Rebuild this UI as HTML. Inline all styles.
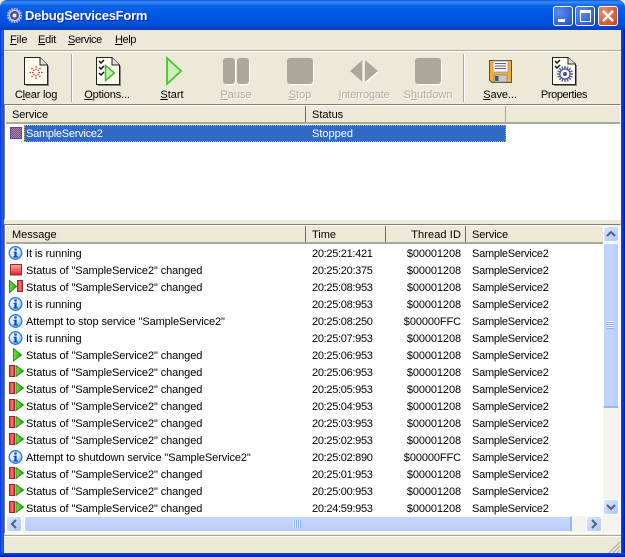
<!DOCTYPE html>
<html><head><meta charset="utf-8"><style>
html,body{margin:0;padding:0;width:625px;height:557px;overflow:hidden;background:#ece9d8}
*{box-sizing:border-box}
body{font:11px/14px "Liberation Sans",sans-serif;color:#000;position:relative}
.a,.a *{position:absolute}
.t{white-space:nowrap}
u{position:static!important}
.tb{top:88px;width:80px;text-align:center;white-space:nowrap}
.dis{color:#aca899;text-shadow:1px 1px 0 #fff}
.hd{background:#ece9d8;border-bottom:2px solid #aca899;height:18px}
.hc{top:0;height:18px;padding:2px 0 0 6px;white-space:nowrap}
.sep{width:1px;height:14px;top:1px;background:#aca899}
.r{left:6px;width:597px;height:17px}
.r svg{left:2px;top:1px}
.r span{top:2px;white-space:nowrap}
.m{left:20px;letter-spacing:-.1px}.ti{left:306px;letter-spacing:-.3px}.th{right:142px;letter-spacing:-.1px}.s{left:466px;letter-spacing:-.25px}
.btn{border:1px solid #fff;border-radius:3px;background:linear-gradient(135deg,#dbe6fd,#aec6f8)}
</style></head><body>
<svg width="0" height="0" style="position:absolute"><defs>
<radialGradient id="ib" cx=".4" cy=".35" r=".7"><stop offset="0" stop-color="#fff"/><stop offset=".55" stop-color="#d4ecff"/><stop offset="1" stop-color="#5cb0f4"/></radialGradient>
<linearGradient id="rd" x1="0" y1="0" x2="0" y2="1"><stop offset="0" stop-color="#f8a8a8"/><stop offset=".5" stop-color="#f46868"/><stop offset="1" stop-color="#e81c1c"/></linearGradient>
<linearGradient id="rh" x1="0" y1="0" x2="1" y2="0"><stop offset="0" stop-color="#f02020"/><stop offset=".5" stop-color="#f88080"/><stop offset="1" stop-color="#e01818"/></linearGradient>
<linearGradient id="gr" x1="0" y1="0" x2="1" y2="0"><stop offset="0" stop-color="#78dc48"/><stop offset="1" stop-color="#18a806"/></linearGradient>
<pattern id="dith" width="2" height="2" patternUnits="userSpaceOnUse"><rect width="2" height="2" fill="#f07070"/><rect width="1" height="1" fill="#3a62c4"/><rect x="1" y="1" width="1" height="1" fill="#3a62c4"/></pattern>
<symbol id="info" viewBox="0 0 15 15"><circle cx="7.500" cy="7" r="6.300" fill="url(#ib)" stroke="#2478e8" stroke-width="1.300"/><rect x="6.300" y="2.400" width="2.400" height="2.200" fill="#0f44c4"/><path d="M5.500 5.600h3.200v4.600h1.200v1.300H5.400v-1.300h1V6.900h-.9z" fill="#0f44c4"/></symbol>
<symbol id="stop" viewBox="0 0 15 15"><rect x="2.500" y="1.500" width="11" height="10.500" fill="url(#rd)" stroke="#8f2b2b"/></symbol>
<symbol id="play" viewBox="0 0 15 15"><path d="M5.500 .5L13.500 7L5.500 13z" fill="url(#gr)" stroke="#1f980c"/></symbol>
<symbol id="pr" viewBox="0 0 18 15"><path d="M.5 .5L7.500 6.500L.5 12.500z" fill="url(#gr)" stroke="#1f980c"/><rect x="8.500" y=".5" width="5" height="11" fill="url(#rh)" stroke="#8f2b2b"/></symbol>
<symbol id="rp" viewBox="0 0 18 15"><rect x=".5" y=".5" width="5" height="11" fill="url(#rh)" stroke="#8f2b2b"/><path d="M7 .5L14.500 6L7 11.500z" fill="url(#gr)" stroke="#1f980c"/></symbol>
</defs></svg>
<div class="a" style="left:0;top:0;width:625px;height:557px">
 <!-- frame -->
 <div style="left:0;top:0;width:625px;height:30px;border-radius:7px 7px 0 0;background:linear-gradient(#0a58e0 0,#3c8cf6 2px,#0a62e6 6px,#0058e6 14px,#0052dc 24px,#0a3fc0 29px)"></div>
 <div style="left:0;top:30px;width:4px;height:527px;background:linear-gradient(90deg,#0831d9,#1f5ff0 50%,#0a4ae0)"></div>
 <div style="left:621px;top:30px;width:4px;height:527px;background:linear-gradient(90deg,#0a4ae0,#0831d9 50%,#0019a8)"></div>
 <div style="left:0;top:553px;width:625px;height:4px;background:linear-gradient(#0a4ae0,#0019a8)"></div>
 <svg style="left:7px;top:8px" width="15" height="15" viewBox="0 0 15 15"><g stroke="#b8b8dc" stroke-width="1.800"><path d="M7.500 0v15M0 7.500h15M2.200 2.200l10.600 10.600M12.800 2.200L2.200 12.800M4.500 .5l6 14M10.500 .5l-6 14M.5 4.500l14 6M.5 10.500l14-6"/></g><circle cx="7.500" cy="7.500" r="5" fill="#50508c" stroke="#ccccE4"/><circle cx="7.500" cy="7.500" r="2" fill="#e8e8f4"/></svg>
 <div class="t" style="left:25px;top:8px;color:#fff;line-height:16px;font-weight:bold;text-shadow:1px 1px 0 #0a2a9c;letter-spacing:-.25px;font-size:13px">DebugServicesForm</div>
 <!-- caption buttons -->
 <div style="left:553px;top:6px;width:20px;height:20px;border:1px solid #fff;border-radius:3px;background:radial-gradient(circle at 30% 30%,#5c8cf0,#1f4fd0)"><div style="left:4px;top:12px;width:7px;height:3px;background:#fff"></div></div>
 <div style="left:575px;top:6px;width:20px;height:20px;border:1px solid #fff;border-radius:3px;background:radial-gradient(circle at 30% 30%,#5c8cf0,#1f4fd0)"><div style="left:4px;top:3px;width:11px;height:12px;border:1px solid #fff;border-top:3px solid #fff"></div></div>
 <div style="left:598px;top:6px;width:20px;height:20px;border:1px solid #fff;border-radius:3px;background:radial-gradient(circle at 30% 30%,#ee9070,#c8401c)"><svg style="left:3px;top:3px" width="12" height="12"><path d="M1 1L11 11M11 1L1 11" stroke="#fff" stroke-width="2.400"/></svg></div>
 <!-- menu -->
 <div class="t" style="left:10px;top:33px;letter-spacing:-.1px"><u>F</u>ile</div>
 <div class="t" style="left:38px;top:33px;letter-spacing:-.2px"><u>E</u>dit</div>
 <div class="t" style="left:68px;top:33px;letter-spacing:-.4px"><u>S</u>ervice</div>
 <div class="t" style="left:115px;top:33px;letter-spacing:-.4px"><u>H</u>elp</div>
 <div style="left:4px;top:50px;width:617px;height:1px;background:#aca899"></div>
 <div style="left:4px;top:51px;width:617px;height:1px;background:#fff"></div>
 <!-- toolbar icons -->
 <svg style="left:24px;top:57px" width="25" height="29" viewBox="0 0 25 29"><path d="M.5.5H16L23.500 8V27.500H.5z" fill="#fffff0" stroke="#222"/><path d="M16 .5V8H23.500" fill="#ddd" stroke="#222"/><path d="M24.500 9V28.500H2" fill="none" stroke="#888"/><g stroke="#d22" stroke-width="1.200" stroke-dasharray="1.500 1"><path d="M12 9v4M12 18v4M5.500 15.500h4M14.500 15.500h4M7.500 11l3 3M13.500 17l3 3M16.500 11l-3 3M7.500 20l3-3"/></g></svg>
 <svg style="left:96px;top:57px" width="25" height="29" viewBox="0 0 25 29"><path d="M.5.5H16L23.500 8V27.500H.5z" fill="#fffff0" stroke="#222"/><path d="M16 .5V8H23.500" fill="#ddd" stroke="#222"/><path d="M24.500 9V28.500H2" fill="none" stroke="#888"/><path d="M3 4l2 2 3-3M3 10l2 2 3-3M3 16l2 2 3-3" fill="none" stroke="#111" stroke-width="1.500"/><path d="M9.500 8.500L18.500 16L9.500 23.500z" fill="#c8f0b4" stroke="#46b52a" stroke-width="1.500"/></svg>
 <svg style="left:165px;top:56px" width="18" height="30" viewBox="0 0 18 30"><path d="M2 2L16 15L2 28z" fill="#cdf0bd" stroke="#4cc22e" stroke-width="1.800"/></svg>
 <div style="left:223px;top:58px;width:12px;height:26px;background:#aca899;border-radius:3px;box-shadow:1px 1px 0 #fff"></div>
 <div style="left:237px;top:58px;width:12px;height:26px;background:#aca899;border-radius:3px;box-shadow:1px 1px 0 #fff"></div>
 <div style="left:287px;top:58px;width:26px;height:26px;background:#aca899;border-radius:3px;box-shadow:1px 1px 0 #fff"></div>
 <svg style="left:350px;top:60px" width="30" height="24" viewBox="0 0 30 24"><path d="M0 11L12.500 0V22zM15 0L28 11L15 22z" fill="#fff" transform="translate(1 1)"/><path d="M0 11L12.500 0V22zM15 0L28 11L15 22z" fill="#aca899"/></svg>
 <div style="left:415px;top:58px;width:26px;height:26px;background:#aca899;border-radius:3px;box-shadow:1px 1px 0 #fff"></div>
 <svg style="left:489px;top:60px" width="23" height="24" viewBox="0 0 23 24"><path d="M.5.5H22.500V22.500H3L.5 20z" fill="#f2ad40" stroke="#5c5030"/><rect x="4" y="1" width="15" height="11" fill="#f4f4f4" stroke="#8a8a8a" stroke-width=".6"/><path d="M6 3.500h11M6 6h11M6 8.500h11" stroke="#667"/><rect x="5" y="15" width="13" height="7" fill="#c8c8c8" stroke="#777" stroke-width=".6"/><rect x="6" y="16" width="3.500" height="5" fill="#555"/></svg>
 <svg style="left:552px;top:57px" width="25" height="29" viewBox="0 0 25 29"><path d="M.5.5H16L23.500 7V27.500H.5z" fill="#fffff0" stroke="#222"/><path d="M16 .5V7H23.500" fill="#ddd" stroke="#222"/><path d="M24.500 8V28.500H2" fill="none" stroke="#888"/><path d="M3 4l2 2 3-3M3 9l2 2 3-3" fill="none" stroke="#111" stroke-width="1.500"/><g stroke="#5a5aa8" stroke-width="1.500"><path d="M13 9v16M5 17h16M7.300 11.300l11.400 11.400M18.700 11.300L7.300 22.700M9.900 9.600l6.200 14.800M16.100 9.600L9.900 24.400M5.600 13.900l14.800 6.200M5.600 20.100l14.800-6.200"/></g><circle cx="13" cy="17" r="5" fill="#fffff0" stroke="#4a4a9c"/><circle cx="13" cy="17" r="2" fill="#4a4a9c"/></svg>
 <div style="left:71px;top:54px;width:1px;height:48px;background:#aca899"></div><div style="left:72px;top:54px;width:1px;height:48px;background:#fff"></div>
 <div style="left:463px;top:54px;width:1px;height:48px;background:#aca899"></div><div style="left:464px;top:54px;width:1px;height:48px;background:#fff"></div>
 <div class="tb" style="left:-4px;letter-spacing:-.2px">C<u>l</u>ear log</div>
 <div class="tb" style="left:67px;letter-spacing:-.15px"><u>O</u>ptions...</div>
 <div class="tb" style="left:132px"><u>S</u>tart</div>
 <div class="tb dis" style="left:196px"><u>P</u>ause</div>
 <div class="tb dis" style="left:260px"><u>S</u>top</div>
 <div class="tb dis" style="left:324px;letter-spacing:-.2px"><u>I</u>nterrogate</div>
 <div class="tb dis" style="left:388px">S<u>h</u>utdown</div>
 <div class="tb" style="left:460px;letter-spacing:-.1px"><u>S</u>ave...</div>
 <div class="tb" style="left:524px;letter-spacing:-.4px">Properties</div>
 <!-- top list -->
 <div style="left:4px;top:104px;width:617px;height:116px;border:1px solid;border-color:#7f7d70 #fff #fff #7f7d70;background:#fff"></div>
 <div class="hd" style="left:6px;top:106px;width:614px">
  <div class="hc" style="left:0;letter-spacing:-.1px">Service</div><div class="sep" style="left:299px;background:#716f64;height:16px;top:0"></div>
  <div class="hc" style="left:300px">Status</div><div class="sep" style="left:499px;background:#aca899;height:16px;top:0"></div>
 </div>
 <svg style="left:10px;top:127px" width="12" height="12"><rect x=".5" y=".5" width="11" height="11" fill="url(#dith)" stroke="#5a4a90"/></svg>
 <div class="t" style="left:24px;top:125px;width:482px;height:17px;background:#316ac5;border:1px dotted #e8a020;color:#fff;padding:1px 0 0 1px;letter-spacing:-.25px">SampleService2<span style="left:287px;top:1px;letter-spacing:0">Stopped</span></div>
 <!-- bottom list -->
 <div style="left:4px;top:224px;width:617px;height:310px;border:1px solid;border-color:#7f7d70 #fff #fff #7f7d70;background:#fff"></div>
 <div class="hd" style="left:6px;top:226px;width:597px">
  <div class="hc" style="left:0">Message</div><div class="sep" style="left:299px;background:#716f64;height:16px;top:0"></div>
  <div class="hc" style="left:300px">Time</div><div class="sep" style="left:379px;background:#716f64;height:16px;top:0"></div>
  <div class="hc" style="left:380px;width:79px;text-align:right;padding-right:4px;letter-spacing:.1px">Thread ID</div><div class="sep" style="left:459px;background:#716f64;height:16px;top:0"></div>
  <div class="hc" style="left:460px;letter-spacing:-.1px">Service</div>
 </div>

 <div class="r" style="top:245px"><svg width="15" height="15"><use href="#info"/></svg><span class="m">It is running</span><span class="ti">20:25:21:421</span><span class="th">$00001208</span><span class="s">SampleService2</span></div>
 <div class="r" style="top:262px"><svg width="15" height="15"><use href="#stop"/></svg><span class="m">Status of "SampleService2" changed</span><span class="ti">20:25:20:375</span><span class="th">$00001208</span><span class="s">SampleService2</span></div>
 <div class="r" style="top:279px"><svg width="18" height="15" style="left:3px"><use href="#pr"/></svg><span class="m">Status of "SampleService2" changed</span><span class="ti">20:25:08:953</span><span class="th">$00001208</span><span class="s">SampleService2</span></div>
 <div class="r" style="top:296px"><svg width="15" height="15"><use href="#info"/></svg><span class="m">It is running</span><span class="ti">20:25:08:953</span><span class="th">$00001208</span><span class="s">SampleService2</span></div>
 <div class="r" style="top:313px"><svg width="15" height="15"><use href="#info"/></svg><span class="m">Attempt to stop service "SampleService2"</span><span class="ti">20:25:08:250</span><span class="th">$00000FFC</span><span class="s">SampleService2</span></div>
 <div class="r" style="top:330px"><svg width="15" height="15"><use href="#info"/></svg><span class="m">It is running</span><span class="ti">20:25:07:953</span><span class="th">$00001208</span><span class="s">SampleService2</span></div>
 <div class="r" style="top:347px"><svg width="15" height="15"><use href="#play"/></svg><span class="m">Status of "SampleService2" changed</span><span class="ti">20:25:06:953</span><span class="th">$00001208</span><span class="s">SampleService2</span></div>
 <div class="r" style="top:364px"><svg width="18" height="15" style="left:3px"><use href="#rp"/></svg><span class="m">Status of "SampleService2" changed</span><span class="ti">20:25:06:953</span><span class="th">$00001208</span><span class="s">SampleService2</span></div>
 <div class="r" style="top:381px"><svg width="18" height="15" style="left:3px"><use href="#rp"/></svg><span class="m">Status of "SampleService2" changed</span><span class="ti">20:25:05:953</span><span class="th">$00001208</span><span class="s">SampleService2</span></div>
 <div class="r" style="top:398px"><svg width="18" height="15" style="left:3px"><use href="#rp"/></svg><span class="m">Status of "SampleService2" changed</span><span class="ti">20:25:04:953</span><span class="th">$00001208</span><span class="s">SampleService2</span></div>
 <div class="r" style="top:415px"><svg width="18" height="15" style="left:3px"><use href="#rp"/></svg><span class="m">Status of "SampleService2" changed</span><span class="ti">20:25:03:953</span><span class="th">$00001208</span><span class="s">SampleService2</span></div>
 <div class="r" style="top:432px"><svg width="18" height="15" style="left:3px"><use href="#rp"/></svg><span class="m">Status of "SampleService2" changed</span><span class="ti">20:25:02:953</span><span class="th">$00001208</span><span class="s">SampleService2</span></div>
 <div class="r" style="top:449px"><svg width="15" height="15"><use href="#info"/></svg><span class="m">Attempt to shutdown service "SampleService2"</span><span class="ti">20:25:02:890</span><span class="th">$00000FFC</span><span class="s">SampleService2</span></div>
 <div class="r" style="top:466px"><svg width="18" height="15" style="left:3px"><use href="#rp"/></svg><span class="m">Status of "SampleService2" changed</span><span class="ti">20:25:01:953</span><span class="th">$00001208</span><span class="s">SampleService2</span></div>
 <div class="r" style="top:483px"><svg width="18" height="15" style="left:3px"><use href="#rp"/></svg><span class="m">Status of "SampleService2" changed</span><span class="ti">20:25:00:953</span><span class="th">$00001208</span><span class="s">SampleService2</span></div>
 <div class="r" style="top:500px"><svg width="18" height="15" style="left:3px"><use href="#rp"/></svg><span class="m">Status of "SampleService2" changed</span><span class="ti">20:24:59:953</span><span class="th">$00001208</span><span class="s">SampleService2</span></div>

 <!-- vscroll -->
 <div style="left:603px;top:225px;width:17px;height:291px;background:#f4f3ee"></div>
 <div class="btn" style="left:603px;top:226px;width:16px;height:16px"><svg style="left:2px;top:3px" width="10" height="8"><path d="M1 6L5 2L9 6" fill="none" stroke="#4d6185" stroke-width="2"/></svg></div>
 <div style="left:603px;top:243px;width:16px;height:165px;background:linear-gradient(90deg,#bfd2fb,#c4d6fd 50%,#b8ccf9);border:1px solid #fff;border-bottom:2px solid #9db5ee;border-radius:2px"></div>
 <div style="left:607px;top:321px;width:7px;height:8px;background:repeating-linear-gradient(#eef3fe 0 1px,#8cb0f8 1px 2px)"></div>
 <div class="btn" style="left:603px;top:499px;width:16px;height:16px"><svg style="left:2px;top:3px" width="10" height="8"><path d="M1 2L5 6L9 2" fill="none" stroke="#4d6185" stroke-width="2"/></svg></div>
 <!-- hscroll -->
 <div style="left:6px;top:516px;width:597px;height:17px;background:#f4f3ee"></div>
 <div class="btn" style="left:6px;top:516px;width:16px;height:16px"><svg style="left:3px;top:2px" width="8" height="10"><path d="M6 1L2 5L6 9" fill="none" stroke="#4d6185" stroke-width="2"/></svg></div>
 <div style="left:24px;top:516px;width:548px;height:16px;background:linear-gradient(#c4d6fd,#bfd2fb 50%,#b8ccf9);border:1px solid #fff;border-right:2px solid #9db5ee;border-radius:2px"></div>
 <div style="left:293px;top:520px;width:8px;height:8px;background:repeating-linear-gradient(90deg,#eef3fe 0 1px,#8cb0f8 1px 2px)"></div>
 <div class="btn" style="left:586px;top:516px;width:16px;height:16px"><svg style="left:3px;top:2px" width="8" height="10"><path d="M2 1L6 5L2 9" fill="none" stroke="#4d6185" stroke-width="2"/></svg></div>
 <div style="left:603px;top:516px;width:17px;height:17px;background:#f4f3ee"></div>
 <!-- status -->
 <div style="left:4px;top:535px;width:617px;height:1px;background:#aca899"></div>
 <div style="left:4px;top:536px;width:617px;height:1px;background:#fff"></div>
 <svg style="left:608px;top:541px" width="13" height="12"><path d="M12 1L1 12M12 5L5 12M12 9L9 12" stroke="#aca899" stroke-width="1.200"/></svg>
</div>
</body></html>
